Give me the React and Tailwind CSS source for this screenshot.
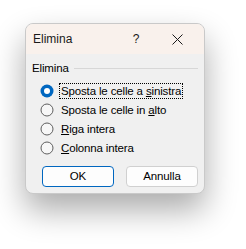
import { useState } from 'react'

const options = [
  { id: 'left', before: 'Sposta le celle a ', key: 's', after: 'inistra' },
  { id: 'up', before: 'Sposta le celle in ', key: 'a', after: 'lto' },
  { id: 'row', before: '', key: 'R', after: 'iga intera' },
  { id: 'col', before: '', key: 'C', after: 'olonna intera' },
]

function Radio({ checked }) {
  return (
    <svg width="14" height="14" viewBox="0 0 14 14" className="shrink-0">
      {checked ? (
        <>
          <circle cx="7" cy="7" r="6.5" fill="#0067c0" />
          <circle cx="7" cy="7" r="3" fill="#ffffff" />
        </>
      ) : (
        <circle cx="7" cy="7" r="6" fill="#f7f7f7" stroke="#5f5f5f" strokeWidth="1" />
      )}
    </svg>
  )
}

export default function App() {
  const [selected, setSelected] = useState('left')

  return (
    <div
      className="w-[246px] h-[249px] bg-white pl-[25px] pt-[23px]"
      style={{ fontFamily: '"Segoe UI", "Liberation Sans", Arial, sans-serif' }}
    >
      <div className="w-[180px] h-[171px] rounded-[8px] border border-[#c9c9c9] bg-[#f0f0f0] overflow-hidden shadow-[0_16px_32px_rgba(0,0,0,0.33)] flex flex-col">
        {/* Title bar */}
        <div className="h-[30px] bg-[#f9f1ec] flex items-center text-[12px] text-[#1a1a1a] shrink-0">
          <span className="pl-[7px] w-[105px]">Elimina</span>
          <span className="w-[10px] text-center">?</span>
          <div className="flex-1 flex justify-center pl-[10px]">
            <svg width="11" height="11" viewBox="0 0 11 11">
              <path d="M0.5 0.5 L10.5 10.5 M10.5 0.5 L0.5 10.5" stroke="#1a1a1a" strokeWidth="1" />
            </svg>
          </div>
        </div>

        {/* Body */}
        <div className="flex-1 px-[6px] pt-[7px] text-[11.5px] tracking-[-0.15px]">
          <div className="flex items-center gap-[5px] text-black leading-[14px]">
            <span>Elimina</span>
            <div className="flex-1 h-px bg-[#d7d7d7]" />
          </div>

          <div className="flex flex-col pl-[8px] pt-[9px] gap-[5px]">
            {options.map((o) => (
              <label
                key={o.id}
                className="flex items-center gap-[6px] h-[14px] text-black cursor-default"
                onClick={() => setSelected(o.id)}
              >
                <Radio checked={selected === o.id} />
                <span
                  className={`leading-[14px] px-[1px] ${
                    selected === o.id ? 'outline outline-1 outline-dotted outline-black' : ''
                  }`}
                >
                  {o.before}
                  <u>{o.key}</u>
                  {o.after}
                </span>
              </label>
            ))}
          </div>

          <div className="flex gap-[12px] pl-[10px] pt-[11px]">
            <button className="w-[72px] h-[21px] rounded-[4px] border border-[#0067c0] bg-[#fdfdfd] text-black">
              OK
            </button>
            <button className="w-[72px] h-[21px] rounded-[4px] border border-[#d0d0d0] bg-[#fdfdfd] text-black">
              Annulla
            </button>
          </div>
        </div>
      </div>
    </div>
  )
}
